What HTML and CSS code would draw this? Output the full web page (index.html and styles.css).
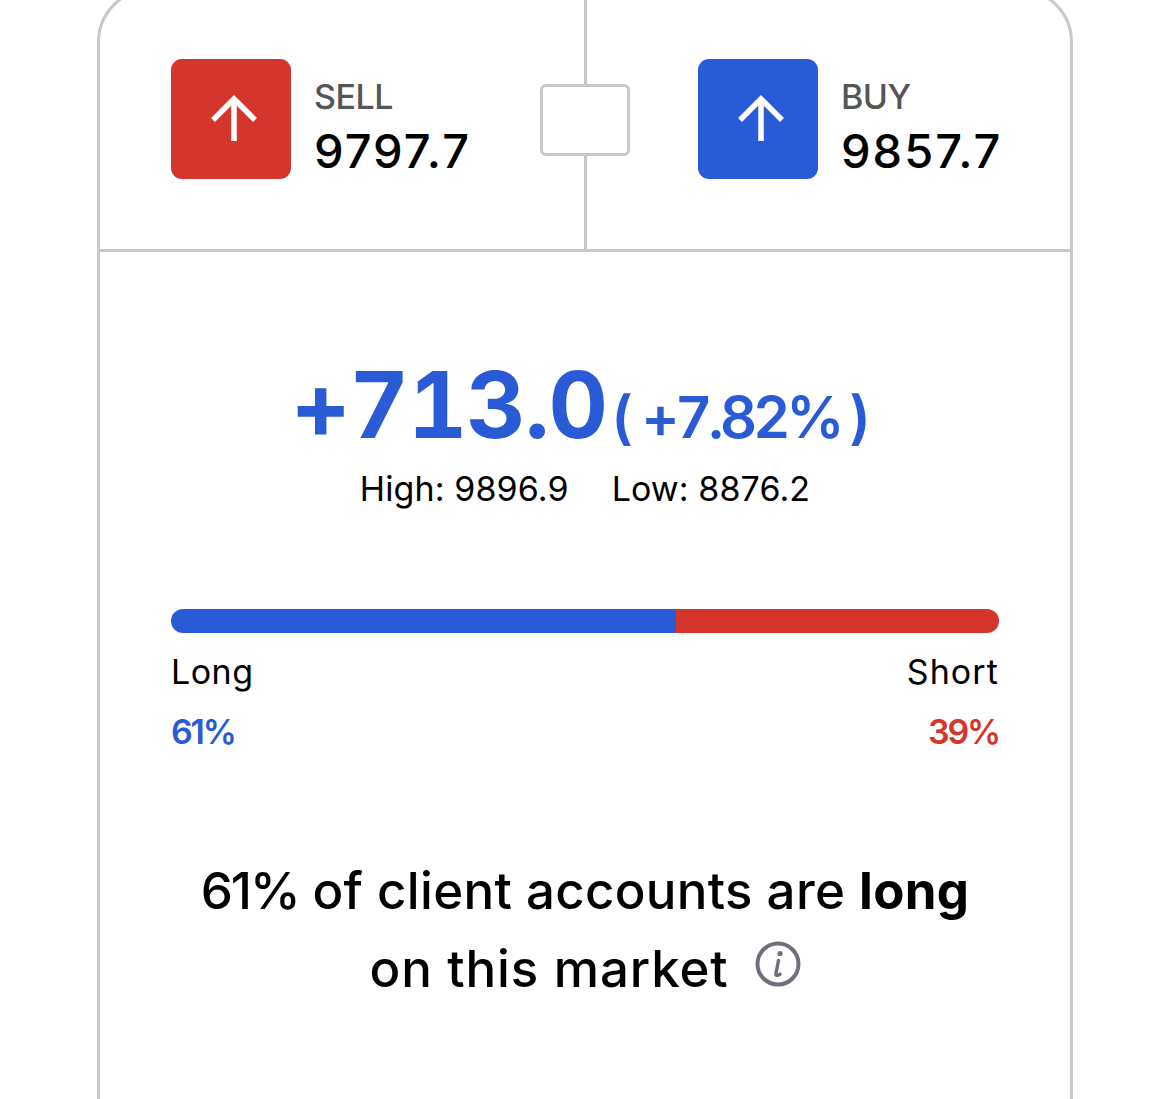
FILE: index.html
```html
<!DOCTYPE html>
<html>
<head>
	<link rel="stylesheet" href="styles.css">
</head>
<body>
    <div class="card">
        <div class="quotes">
            <div class="quote">
                <div class="tile tile_sell">
                    <svg class="arrow" viewBox="0 0 48 48" width="48" height="48"><path d="M24 46V4M3 25L24 4l21 21" fill="none" stroke="#fff" stroke-width="5.5"/></svg>
                </div>
                <div class="quote_text">
                    <div class="quote_label">SELL</div>
                    <div class="quote_price">9797.7</div>
                </div>
            </div>
            <div class="quote">
                <div class="tile tile_buy">
                    <svg class="arrow" viewBox="0 0 48 48" width="48" height="48"><path d="M24 46V4M3 25L24 4l21 21" fill="none" stroke="#fff" stroke-width="5.5"/></svg>
                </div>
                <div class="quote_text">
                    <div class="quote_label">BUY</div>
                    <div class="quote_price">9857.7</div>
                </div>
            </div>
            <div class="spread"></div>
        </div>

        <div class="change">
            <span class="change_value">+713.0</span><span class="change_percent">(<span class="change_inner">+7.82%</span>)</span>
        </div>
        <div class="range">
            <span>High: 9896.9</span>
            <span>Low: 8876.2</span>
        </div>

        <div class="bar">
            <div class="bar_long"></div>
            <div class="bar_short"></div>
        </div>
        <div class="sentiment">
            <div class="sentiment_label">Long</div>
            <div class="sentiment_label">Short</div>
        </div>
        <div class="sentiment sentiment_values">
            <div class="pct_long">61%</div>
            <div class="pct_short">39%</div>
        </div>

        <p class="summary"><span class="summary_pct">61%</span> of client accounts are <b>long</b><br><span class="summary_end">on this market</span><svg class="info" viewBox="0 0 46 46" width="46" height="46"><circle cx="23" cy="23" r="20.5" fill="none" stroke="#6f6f7b" stroke-width="4"/><circle cx="25" cy="12.5" r="2.6" fill="#6f6f7b"/><path d="M23.5 19.5l-2.6 13c-.3 2 1.6 2.6 4.1.6" fill="none" stroke="#6f6f7b" stroke-width="3.4" stroke-linecap="round"/></svg></p>
    </div>
</body>
</html>
```

FILE: styles.css
```css
body {
	margin: 0;
	background-color: #fff;
	font-family: "Inter", "Liberation Sans", sans-serif;
	color: #000;
	overflow: hidden;
	height: 1099px;
}
.card {
	box-sizing: border-box;
	width: 976px;
	height: 1300px;
	margin: -12px 0 0 97px;
	border: 3px solid #c8c8c8;
	border-radius: 54px;
}
.quotes {
	position: relative;
	display: grid;
	grid-template-columns: 487px 1fr;
	height: 256px;
	padding-bottom: 2px;
	border-bottom: 3px solid #c8c8c8;
}
.quote {
	display: flex;
	align-items: center;
	padding-left: 71px;
	margin-bottom: -2px;
}
.quote:first-child {
	border-right: 3px solid #c8c8c8;
}
.quote:nth-child(2) {
	padding-left: 111px;
}
.tile {
	width: 120px;
	height: 120px;
	margin-bottom: 2px;
	border-radius: 11px;
	display: flex;
	align-items: center;
	justify-content: center;
	flex-shrink: 0;
}
.tile_sell { background-color: #d4352d; }
.tile_buy { background-color: #2a5bd7; }
.arrow {
	margin-left: 6px;
}
.quote_text {
	margin-left: 23px;
	padding-top: 13px;
}
.quote_label {
	font-size: 34px;
	line-height: 42px;
	margin-bottom: 6px;
	font-weight: 500;
	letter-spacing: -0.5px;
	color: #555;
}
.quote_price {
	font-size: 47px;
	line-height: 54px;
	font-weight: 500;
	letter-spacing: 2px;
}
.spread {
	position: absolute;
	left: 440px;
	top: 93px;
	box-sizing: border-box;
	width: 90px;
	height: 72px;
	background-color: #fff;
	border: 3px solid #c8c8c8;
	border-radius: 6px;
}
.change {
	margin-top: 97px;
	display: flex;
	justify-content: center;
	align-items: baseline;
	color: #2a5bd7;
	height: 112px;
	line-height: 112px;
	font-variant-numeric: tabular-nums;
}
.change_value {
	font-size: 92px;
	font-weight: 700;
	letter-spacing: -1px;
}
.change_percent {
	font-size: 58px;
	font-weight: 600;
	margin: 0 8px 0 4px;
}
.change_inner {
	margin: 0 8px;
	letter-spacing: -4.2px;
}
.range {
	display: flex;
	justify-content: center;
	gap: 43px;
	font-size: 34px;
	line-height: 44px;
	margin-top: 6px;
	letter-spacing: 0.1px;
}
.bar {
	display: flex;
	height: 24px;
	margin: 98px 71px 0;
	border-radius: 12px;
	overflow: hidden;
}
.bar_long {
	width: 505px;
	background-color: #2a5bd7;
}
.bar_short {
	flex: 1;
	background-color: #d4352d;
}
.sentiment {
	display: flex;
	justify-content: space-between;
	margin: 18px 71px 0;
	font-size: 34px;
	line-height: 42px;
}
.sentiment_label {
	letter-spacing: 0.5px;
}
.sentiment_label:last-child {
	letter-spacing: 1.1px;
}
.sentiment_values {
	font-weight: 600;
	margin-top: 18px;
	letter-spacing: -2.2px;
}
.pct_long { color: #2a5bd7; }
.pct_short { color: #d4352d; }
.summary {
	margin: 99px 0 0;
	text-align: center;
	font-size: 51px;
	line-height: 78px;
	font-weight: 500;
	letter-spacing: 0.3px;
}
.summary_pct {
	letter-spacing: -2px;
}
.summary_end {
	letter-spacing: 0.9px;
}
.summary b {
	font-weight: 700;
}
.info {
	margin-left: 26px;
	vertical-align: 0;
}
```
